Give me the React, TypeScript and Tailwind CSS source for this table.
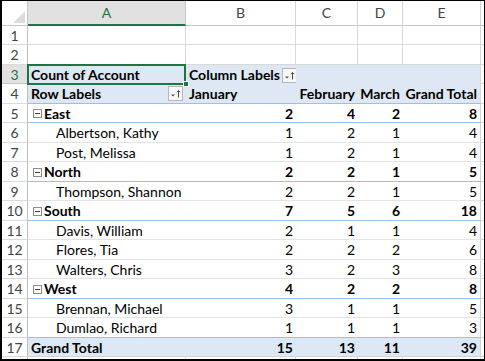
import React from "react";

const GRID = "border-[#d9d9d9]";
const W = ["w-[26px]", "w-[158px]", "w-[110px]", "w-[62px]", "w-[45px]", "w-[78px]"];

function FilterBtn() {
  return (
    <div className="w-[15px] h-[15px] border border-[#b8b8b8] bg-[#f8f8f8] flex items-center justify-center shrink-0">
      <svg width="13" height="13" viewBox="0 0 13 13">
        <path d="M2 7.5 L6 7.5 L4 9.5 Z" fill="#505050" />
        <path d="M9.5 3.5 V10.5" stroke="#505050" strokeWidth="1" />
        <path d="M7.8 5.2 L9.5 3.5 L11.2 5.2" stroke="#505050" strokeWidth="1" fill="none" />
      </svg>
    </div>
  );
}

function Collapse() {
  return (
    <div className="w-[9px] h-[9px] border border-[#8c8c8c] bg-white flex items-center justify-center shrink-0 mr-[2px]">
      <div className="w-[5px] h-px bg-[#404040]" />
    </div>
  );
}

type R = { label: string; vals: number[]; kind: "region" | "child" | "total" };

const data: R[] = [
  { label: "East", vals: [2, 4, 2, 8], kind: "region" },
  { label: "Albertson, Kathy", vals: [1, 2, 1, 4], kind: "child" },
  { label: "Post, Melissa", vals: [1, 2, 1, 4], kind: "child" },
  { label: "North", vals: [2, 2, 1, 5], kind: "region" },
  { label: "Thompson, Shannon", vals: [2, 2, 1, 5], kind: "child" },
  { label: "South", vals: [7, 5, 6, 18], kind: "region" },
  { label: "Davis, William", vals: [2, 1, 1, 4], kind: "child" },
  { label: "Flores, Tia", vals: [2, 2, 2, 6], kind: "child" },
  { label: "Walters, Chris", vals: [3, 2, 3, 8], kind: "child" },
  { label: "West", vals: [4, 2, 2, 8], kind: "region" },
  { label: "Brennan, Michael", vals: [3, 1, 1, 5], kind: "child" },
  { label: "Dumlao, Richard", vals: [1, 1, 1, 3], kind: "child" },
  { label: "Grand Total", vals: [15, 13, 11, 39], kind: "total" },
];

function RowHead({ n, h, sel }: { n: number; h: string; sel?: boolean }) {
  return (
    <div
      className={`${W[0]} ${h} shrink-0 flex items-center justify-center pt-[1px] border-b border-r ${
        sel ? "bg-[#e1e1e1] text-[#217346] border-r-[#217346] border-b-[#c6c6c6]" : "bg-white text-[#444] border-b-[#dadada] border-r-[#bfbfbf]"
      }`}
    >
      {n}
    </div>
  );
}

function Filler({ h, line = true }: { h: string; line?: boolean }) {
  return <div className={`flex-1 ${h} ${line ? "border-b " + GRID : ""} bg-white`} />;
}

export default function App() {
  const rowH = (i: number) => (i % 2 === 0 ? "h-[19px]" : "h-[20px]");

  return (
    <div className="w-[485px] h-[361px] bg-white border-black border-t border-r border-l-2 border-b-2 overflow-hidden font-['Lato',sans-serif] text-[14px] text-black leading-none">
      {/* column header */}
      <div className="flex h-[25px]">
        <div className={`${W[0]} h-full shrink-0 border-r border-b border-[#c6c6c6] bg-white relative`}>
          <svg className="absolute right-[2px] bottom-[2px]" width="12" height="12" viewBox="0 0 12 12">
            <path d="M12 0 L12 12 L0 12 Z" fill="#dcdcdc" />
          </svg>
        </div>
        <div className={`${W[1]} h-full shrink-0 bg-[#e1e1e1] border-r border-r-[#c6c6c6] border-b-2 border-b-[#217346] flex items-center justify-center text-[#217346]`}>
          A
        </div>
        {["B", "C", "D", "E"].map((c, i) => (
          <div
            key={c}
            className={`${W[i + 2]} h-full shrink-0 bg-white border-r border-b border-[#d4d4d4] border-b-[#c6c6c6] flex items-center justify-center text-[#444]`}
          >
            {c}
          </div>
        ))}
        <div className="flex-1 h-full border-b border-[#c6c6c6] bg-white" />
      </div>

      {/* rows 1-2 */}
      {[1, 2].map((n) => (
        <div key={n} className="flex">
          <RowHead n={n} h={rowH(n - 1)} />
          {[1, 2, 3, 4, 5].map((c) => (
            <div key={c} className={`${W[c]} ${rowH(n - 1)} shrink-0 border-r border-b ${GRID} ${n === 2 && c === 1 ? "border-b-[#217346]" : ""}`} />
          ))}
          <Filler h={rowH(n - 1)} />
        </div>
      ))}

      {/* row 3 */}
      <div className="flex">
        <RowHead n={3} h={rowH(2)} sel />
        <div className={`${W[1]} ${rowH(2)} shrink-0 bg-[#dde8f4] relative flex items-center pl-[3px] pt-[1px] font-bold`}>
          Count of Account
          <div className="absolute left-[-1px] top-[-1px] right-0 bottom-[-1px] border-2 border-[#217346]" />
          <div className="absolute right-[-3px] bottom-[-3px] w-[6px] h-[6px] bg-[#217346] border border-white" />
        </div>
        <div className={`${W[2]} ${rowH(2)} shrink-0 bg-[#dde8f4] flex items-center pl-[3px] pt-[1px] font-bold gap-[2px] whitespace-nowrap`}>
          Column Labels
          <FilterBtn />
        </div>
        <div className={`${W[3]} ${rowH(2)} shrink-0 bg-[#dde8f4]`} />
        <div className={`${W[4]} ${rowH(2)} shrink-0 bg-[#dde8f4]`} />
        <div className={`${W[5]} ${rowH(2)} shrink-0 bg-[#dde8f4] border-r ${GRID}`} />
        <Filler h={rowH(2)} />
      </div>

      {/* row 4 */}
      <div className="flex">
        <RowHead n={4} h={rowH(3)} />
        <div className={`${W[1]} ${rowH(3)} shrink-0 bg-[#dde8f4] border-b border-[#9dbfe3] flex items-center justify-between pl-[3px] pr-[3px] font-bold`}>
          <span className="pt-[1px]">Row Labels</span>
          <FilterBtn />
        </div>
        <div className={`${W[2]} ${rowH(3)} shrink-0 bg-[#dde8f4] border-b border-[#9dbfe3] flex items-center pl-[3px] pt-[1px] font-bold`}>
          January
        </div>
        <div className={`${W[3]} ${rowH(3)} shrink-0 bg-[#dde8f4] border-b border-[#9dbfe3] flex items-center justify-end pr-[3px] pt-[1px] font-bold whitespace-nowrap`}>
          February
        </div>
        <div className={`${W[4]} ${rowH(3)} shrink-0 bg-[#dde8f4] border-b border-[#9dbfe3] flex items-center justify-end pr-[3px] pt-[1px] font-bold`}>
          March
        </div>
        <div className={`${W[5]} ${rowH(3)} shrink-0 bg-[#dde8f4] border-b border-b-[#9dbfe3] border-r ${GRID} flex items-center justify-end pr-[3px] pt-[1px] font-bold whitespace-nowrap`}>
          Grand Total
        </div>
        <Filler h={rowH(3)} />
      </div>

      {/* pivot data rows */}
      {data.map((r, idx) => {
        const n = idx + 5;
        const h = rowH(n - 1);
        const next = data[idx + 1];
        const blueLine = r.kind === "region" || (next && next.kind === "total");
        const bCls = r.kind === "total" ? "border-b border-b-[#d4d4d4]" : blueLine ? "border-b border-b-[#9dbfe3]" : "border-b border-b-[#e4e4e4]";
        const bg = r.kind === "total" ? "bg-[#dde8f4]" : "bg-white";
        const bold = r.kind !== "child" ? "font-bold" : "";
        return (
          <div key={n} className="flex">
            <RowHead n={n} h={h} />
            <div className={`${W[1]} ${h} shrink-0 ${bg} ${bCls} ${bold} flex items-center pt-[1px] ${r.kind === "child" ? "pl-[28px]" : r.kind === "region" ? "pl-[5px]" : "pl-[3px]"}`}>
              {r.kind === "region" && <Collapse />}
              <span>{r.label}</span>
            </div>
            {r.vals.map((v, j) => (
              <div
                key={j}
                className={`${W[j + 2]} ${h} shrink-0 ${bg} ${bCls} ${bold} ${j === 3 ? "border-r border-r-[#d4d4d4]" : ""} flex items-center justify-end pr-[3px] pt-[1px]`}
              >
                {v}
              </div>
            ))}
            <Filler h={h} />
          </div>
        );
      })}

      {/* partial row 18 */}
      <div className="flex h-[2px]">
        <div className={`${W[0]} h-full shrink-0 border-r border-[#bfbfbf]`} />
        {[1, 2, 3, 4, 5].map((c) => (
          <div key={c} className={`${W[c]} h-full shrink-0 border-r ${GRID}`} />
        ))}
      </div>
    </div>
  );
}
